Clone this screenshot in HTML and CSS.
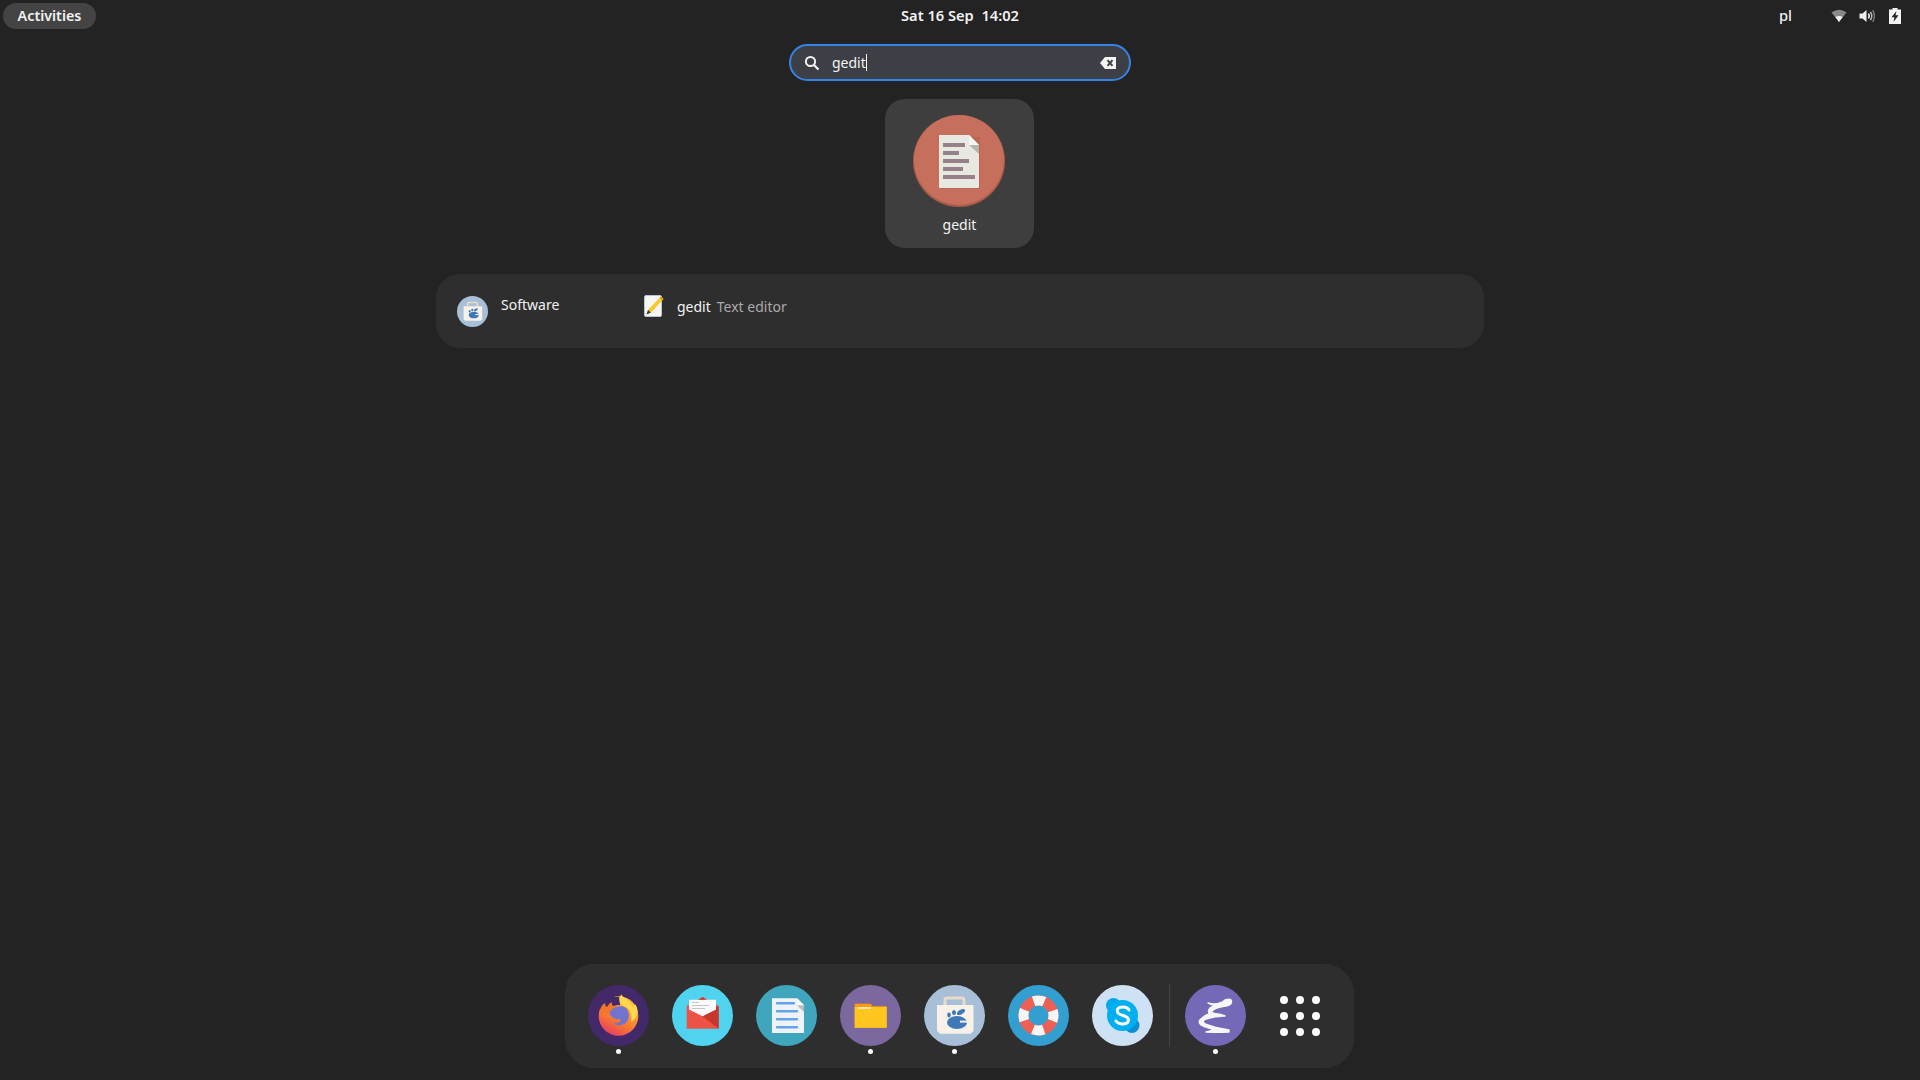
FILE: index.html
```html
<!DOCTYPE html>
<html lang="en">
<head>
    <meta charset="UTF-8">
    <meta name="viewport" content="width=device-width, initial-scale=1.0">
    <title>Activities</title>
    <link rel="stylesheet" href="styles.css">
</head>
<body>
    <header class="panel">
        <div class="panel-left"><span class="activities">Activities</span></div>
        <div class="clock">Sat 16 Sep  14:02</div>
        <div class="panel-right">
            <span class="lang">pl</span>
            <svg class="tray-wifi" width="16" height="16" viewBox="0 0 16 16">
                <path d="M0.5 4.5Q8 -0.8 15.5 4.5L8 14Z" fill="#8a8a8a"/>
                <path d="M4.4 9.1Q8 7 11.6 9.1L8 14Z" fill="#f0f0f0"/>
            </svg>
            <svg class="tray-vol" width="17" height="16" viewBox="0 0 17 16">
                <path d="M0.5 5.5H3.5L7.5 2V14L3.5 10.5H0.5Z" fill="#eee"/>
                <path d="M9.5 5.5Q11 8 9.5 10.5" fill="none" stroke="#eee" stroke-width="1.6"/>
                <path d="M11.5 3.8Q14 8 11.5 12.2" fill="none" stroke="#bbb" stroke-width="1.5"/>
                <path d="M13.7 2.2Q17 8 13.7 13.8" fill="none" stroke="#777" stroke-width="1.5"/>
            </svg>
            <svg class="tray-batt" width="12" height="16" viewBox="0 0 12 16">
                <path d="M3.5 0H8.5V1.5H12V16H0V1.5H3.5Z" fill="#f4f4f4"/>
                <path d="M7.5 3L2.5 9.3H5.5L4.5 14L9.5 7.2H6.5Z" fill="#232323"/>
            </svg>
        </div>
    </header>

    <main class="overview">
        <div class="search">
            <svg width="16" height="16" viewBox="0 0 16 16" class="search-icon">
                <circle cx="6.5" cy="6.5" r="4.6" fill="none" stroke="#f2f2f2" stroke-width="2"/>
                <path d="M10 10L14.5 14.5" stroke="#f2f2f2" stroke-width="2.2"/>
            </svg>
            <span class="search-text">gedit</span><span class="caret"></span>
            <svg width="16" height="12" viewBox="0 0 16 12" class="search-clear">
                <path d="M0 6L5 0H16V12H5Z" fill="#f4f4f4"/>
                <path d="M7.5 3.2L12.5 8.8M12.5 3.2L7.5 8.8" stroke="#3c3f45" stroke-width="2"/>
            </svg>
        </div>

        <div class="app-tile">
            <svg class="app-tile-icon" width="92" height="92" viewBox="0 0 92 92">
                <circle cx="46" cy="46" r="46" fill="#a95b48"/>
                <circle cx="46" cy="45" r="45" fill="#c56f5c"/>
                <rect x="28" y="22" width="39" height="52" fill="#b0604c" opacity=".6"/>
                <path d="M26 20H56L66 30V72Q66 73 65 73H27Q26 73 26 72Z" fill="#e8e8e2"/>
                <path d="M56 20L66 30L66 39L56 30Z" fill="#b4b6ae"/>
                <path d="M56 20L66 30H56Z" fill="#f6f6f2"/>
                <g fill="#96808a">
                    <rect x="30" y="28" width="22" height="4"/>
                    <rect x="30" y="36" width="16" height="4"/>
                    <rect x="30" y="44" width="26" height="4"/>
                    <rect x="30" y="52" width="20" height="4"/>
                    <rect x="30" y="60" width="32" height="4"/>
                </g>
            </svg>
            <span class="app-tile-name">gedit</span>
        </div>

        <section class="results">
            <div class="provider">
                <svg width="31" height="31" viewBox="0 0 61 61">
                    <circle cx="30.5" cy="30.5" r="30.5" fill="#a8bfd8"/>
                    <path d="M21 21V15Q21 13 23 13H38Q40 13 40 15V21" fill="none" stroke="#e6dcc9" stroke-width="3"/>
                    <path d="M13 20H49.5V46L46.5 48.7H16L13 46Z" fill="#f8f1e7"/>
                    <ellipse cx="33" cy="37.5" rx="10" ry="6.5" fill="#3f78b8"/>
                    <rect x="36" y="35.6" width="8" height="2" fill="#f8f1e7"/>
                    <ellipse cx="25" cy="30" rx="1.8" ry="2.4" fill="#3f78b8"/>
                    <ellipse cx="30" cy="27.5" rx="2" ry="2.6" fill="#3f78b8"/>
                    <ellipse cx="37" cy="27" rx="4.5" ry="2.2" transform="rotate(-30 37 27)" fill="#3f78b8"/>
                </svg>
                <span class="provider-name">Software</span>
            </div>
            <div class="result-item">
                <svg width="20" height="22" viewBox="0 0 20 22">
                    <rect x="0.5" y="0.5" width="17" height="21" rx="1.5" fill="#f6f6f2" stroke="#b8c4d4"/>
                    <path d="M17 1.5L19.5 4L7 17.5L2.5 19.5L4 15Z" fill="#f6c928"/>
                    <path d="M17 1.5L19.5 4L18 5.6L15.5 3.1Z" fill="#e69a1c"/>
                    <path d="M4 15L7 17.5L2.5 19.5Z" fill="#3d3846"/>
                </svg>
                <span class="result-name">gedit</span>
                <span class="result-desc">Text editor</span>
            </div>
        </section>
    </main>

    <footer class="dock">
        <div class="dock-item running">
            <svg width="61" height="61" viewBox="0 0 61 61">
                <defs>
                    <linearGradient id="fox" x1="0.8" y1="0.1" x2="0.3" y2="1">
                        <stop offset="0" stop-color="#ffc23e"/>
                        <stop offset="0.6" stop-color="#f97a2f"/>
                        <stop offset="1" stop-color="#e63e63"/>
                    </linearGradient>
                </defs>
                <circle cx="30.5" cy="30.5" r="30.5" fill="#44296a"/>
                <circle cx="30.5" cy="31" r="19.8" fill="url(#fox)"/>
                <path d="M10 12H31L32 20Q25 20 21 24Q16 22 12 26Z" fill="#44296a"/>
                <path d="M11 29Q12 21 17 18Q17 21 19 22Q21 18 24 17Q23 20 26 21Q31 22 32 24Q24 24 20 29Z" fill="#f6752c"/>
                <path d="M33 9.5C30 15 32 20 38 22C43 25 44 30 43 37C50 33 51.5 25 47 19C45.5 22 45 22 44 21C42 16 37 14 33 9.5Z" fill="#ffd84e"/>
                <path d="M21.5 28C24 22 33 19 38 23C42 27 42 35 37 38.5C33 41 28 41 25 38C29 39 33 37 32.5 34C28 35 23 33 21.5 28Z" fill="#7174cf"/>
            </svg>
        </div>
        <div class="dock-item">
            <svg width="61" height="61" viewBox="0 0 61 61">
                <circle cx="30.5" cy="30.5" r="30.5" fill="#4fd3ef"/>
                <path d="M14.7 21L30.5 12L46.7 21V43.7H14.7Z" fill="#ee5246"/>
                <path d="M30.5 31.3L46.7 21V43.7Z" fill="#c9372c"/>
                <path d="M17 14.7H44V24.5L30.5 31.3L17 24.5Z" fill="#fafafa"/>
                <path d="M20 17.5H27M20 20.5H37M20 23.5H33" stroke="#c4c4c4" stroke-width="1.2"/>
                <path d="M27 14.7L30.5 12L34 14.7Z" fill="#c9372c"/>
            </svg>
        </div>
        <div class="dock-item">
            <svg width="61" height="61" viewBox="0 0 61 61">
                <circle cx="30.5" cy="30.5" r="30.5" fill="#3fa6bd"/>
                <path d="M16 13.3H41L48 20.3V48H16Z" fill="#f0f3f6"/>
                <path d="M41 13.3L48 20.3V27L41 20.3Z" fill="#b5bfc2"/>
                <path d="M41 13.3L48 20.3H41Z" fill="#fbfbfb"/>
                <path d="M21 18.3H38M21 26.3H41M21 34.3H41M21 42.3H41" stroke="#62a5ef" stroke-width="2.4" stroke-linecap="round"/>
            </svg>
        </div>
        <div class="dock-item running">
            <svg width="61" height="61" viewBox="0 0 61 61">
                <circle cx="30.5" cy="30.5" r="30.5" fill="#7a689f"/>
                <path d="M14.7 18.7H31L32 21.3H46.7V42.7H14.7Z" fill="#ff9a0a"/>
                <path d="M14.7 22H46.7V42.7H14.7Z" fill="#ffc61f"/>
                <path d="M17.7 23H31" stroke="#fff" stroke-width="1.2"/>
            </svg>
        </div>
        <div class="dock-item running">
            <svg width="61" height="61" viewBox="0 0 61 61">
                <circle cx="30.5" cy="30.5" r="30.5" fill="#a8bfd8"/>
                <path d="M21 21V15Q21 13 23 13H38Q40 13 40 15V21" fill="none" stroke="#e6dcc9" stroke-width="3"/>
                <path d="M13 20H49.5V46L46.5 48.7H16L13 46Z" fill="#f8f1e7"/>
                <ellipse cx="33" cy="37.5" rx="10" ry="6.5" fill="#3f78b8"/>
                <rect x="36" y="35.6" width="8" height="2" fill="#f8f1e7"/>
                <ellipse cx="25" cy="30" rx="1.8" ry="2.4" fill="#3f78b8"/>
                <ellipse cx="30" cy="27.5" rx="2" ry="2.6" fill="#3f78b8"/>
                <ellipse cx="37" cy="27" rx="4.5" ry="2.2" transform="rotate(-30 37 27)" fill="#3f78b8"/>
            </svg>
        </div>
        <div class="dock-item">
            <svg width="61" height="61" viewBox="0 0 61 61">
                <circle cx="30.5" cy="30.5" r="30.5" fill="#339fd0"/>
                <circle cx="30.5" cy="30.5" r="15" fill="none" stroke="#ee5f55" stroke-width="10"/>
                <circle cx="30.5" cy="30.5" r="15" fill="none" stroke="#f6f6f6" stroke-width="10" stroke-dasharray="11 12.56" stroke-dashoffset="5.5"/>
            </svg>
        </div>
        <div class="dock-item">
            <svg width="61" height="61" viewBox="0 0 61 61">
                <circle cx="30.5" cy="30.5" r="30.5" fill="#cfe1f4"/>
                <circle cx="21.5" cy="20.5" r="7.5" fill="#00a8ee"/>
                <circle cx="40" cy="40.5" r="7.5" fill="#0b8fd4"/>
                <circle cx="30.5" cy="30.5" r="15.5" fill="#00aff0"/>
                <path d="M37 25Q35 21.7 30.5 22Q25 22.3 25.3 26Q25.5 29 31 30.5Q36.5 32 36.5 35Q36 39 30.5 39Q26 39 24 36" fill="none" stroke="#fff" stroke-width="3" stroke-linecap="round"/>
            </svg>
        </div>
        <div class="dock-sep"></div>
        <div class="dock-item running">
            <svg width="61" height="61" viewBox="0 0 61 61">
                <circle cx="30.5" cy="30.5" r="30.5" fill="#7469b6"/>
                <path d="M23 18Q33 21 40 15Q46 13 46.5 16Q47 20 41 21Q31 22 27 26Q26 28 30 28.5Q36 29 40 31Q30 31 21 34Q16 36 20 39Q30 43 44 45L44 47Q32 47.5 21 47Q28 45 31 45Q21 43 16 40Q12 36 17 33Q22 29 25 29Q22 27 25 23Q30 20 33 20Q27 21 23 18Z" fill="#f6f6f8" stroke="#f6f6f8" stroke-width="1.4" stroke-linejoin="round"/>
            </svg>
        </div>
        <div class="dock-item dock-grid">
            <div class="app-grid">
                <i></i><i></i><i></i><i></i><i></i><i></i><i></i><i></i><i></i>
            </div>
        </div>
    </footer>
</body>
</html>
```

FILE: styles.css
```css
body {
    font-family: "Noto Sans", sans-serif;
    font-size: 14px;
    background-color: #232323;
    color: #f2f2f2;
    margin: 0;
    height: 1080px;
    display: flex;
    flex-direction: column;
    overflow: hidden;
}
.panel {
    display: grid;
    grid-template-columns: 1fr auto 1fr;
    align-items: center;
    height: 32px;
    font-size: 14.67px;
    font-weight: 600;
}
.panel-left {
    padding-left: 3px;
}
.activities {
    display: inline-block;
    width: 93px;
    height: 26px;
    line-height: 25px;
    text-align: center;
    font-size: 14.3px;
    background: #444;
    border-radius: 13px;
}
.clock {
    white-space: pre;
    margin-top: -3px;
}
.panel-right {
    display: flex;
    align-items: center;
    justify-content: flex-end;
    padding-right: 19px;
}
.lang {
    margin: -2px 39px 0 0;
    font-weight: 500;
}
.tray-wifi {
    margin-right: 12px;
}
.tray-vol {
    margin-right: 13px;
}
.overview {
    flex: 1;
    display: flex;
    flex-direction: column;
    align-items: center;
}
.search {
    box-sizing: border-box;
    width: 342px;
    height: 37px;
    margin-top: 12px;
    padding: 0 13px 0 13px;
    display: flex;
    align-items: center;
    background: #3c3f45;
    border: 2px solid #3584e4;
    border-radius: 19px;
}
.search-text {
    margin-left: 12px;
}
.caret {
    width: 1px;
    height: 17px;
    background: #fff;
}
.search-clear {
    margin-left: auto;
}
.app-tile {
    box-sizing: border-box;
    width: 149px;
    height: 149px;
    margin: 18px 1px 0 0;
    padding-top: 16px;
    display: flex;
    flex-direction: column;
    align-items: center;
    background: #3e3e3e;
    border-radius: 20px;
}
.app-tile-icon {
    margin-right: 1px;
}
.app-tile-name {
    margin-top: 8px;
}
.results {
    box-sizing: border-box;
    width: 1048px;
    height: 74px;
    margin-top: 26px;
    padding: 22px 0 0 21px;
    display: flex;
    background: #2e2e2e;
    border-radius: 24px;
}
.provider {
    width: 187px;
    display: flex;
}
.provider-name {
    margin: -1px 0 0 13px;
    line-height: 20px;
}
.result-item {
    display: flex;
    height: 20px;
    align-items: center;
}
.result-name {
    margin-left: 13px;
}
.result-desc {
    margin-left: 6px;
    color: #aaa;
}
.dock {
    box-sizing: border-box;
    width: 789px;
    height: 104px;
    margin: 0 auto 12px 565px;
    padding: 21px 12px 0 11px;
    display: flex;
    align-items: flex-start;
    background: #2e2e2e;
    border-radius: 29px;
}
.dock-item {
    position: relative;
    width: 84px;
    height: 61px;
    display: flex;
    justify-content: center;
}
.dock-grid {
    padding-left: 1px;
}
.running::after {
    content: "";
    position: absolute;
    left: 40px;
    bottom: -8px;
    width: 5px;
    height: 5px;
    border-radius: 50%;
    background: #fff;
}
.dock-sep {
    width: 1px;
    height: 63px;
    margin: -1px 3px 0 5px;
    background: #444;
}
.app-grid {
    display: grid;
    grid-template-columns: repeat(3, 8px);
    gap: 8px;
    align-content: center;
}
.app-grid i {
    height: 8px;
    border-radius: 50%;
    background: #fff;
}
```
